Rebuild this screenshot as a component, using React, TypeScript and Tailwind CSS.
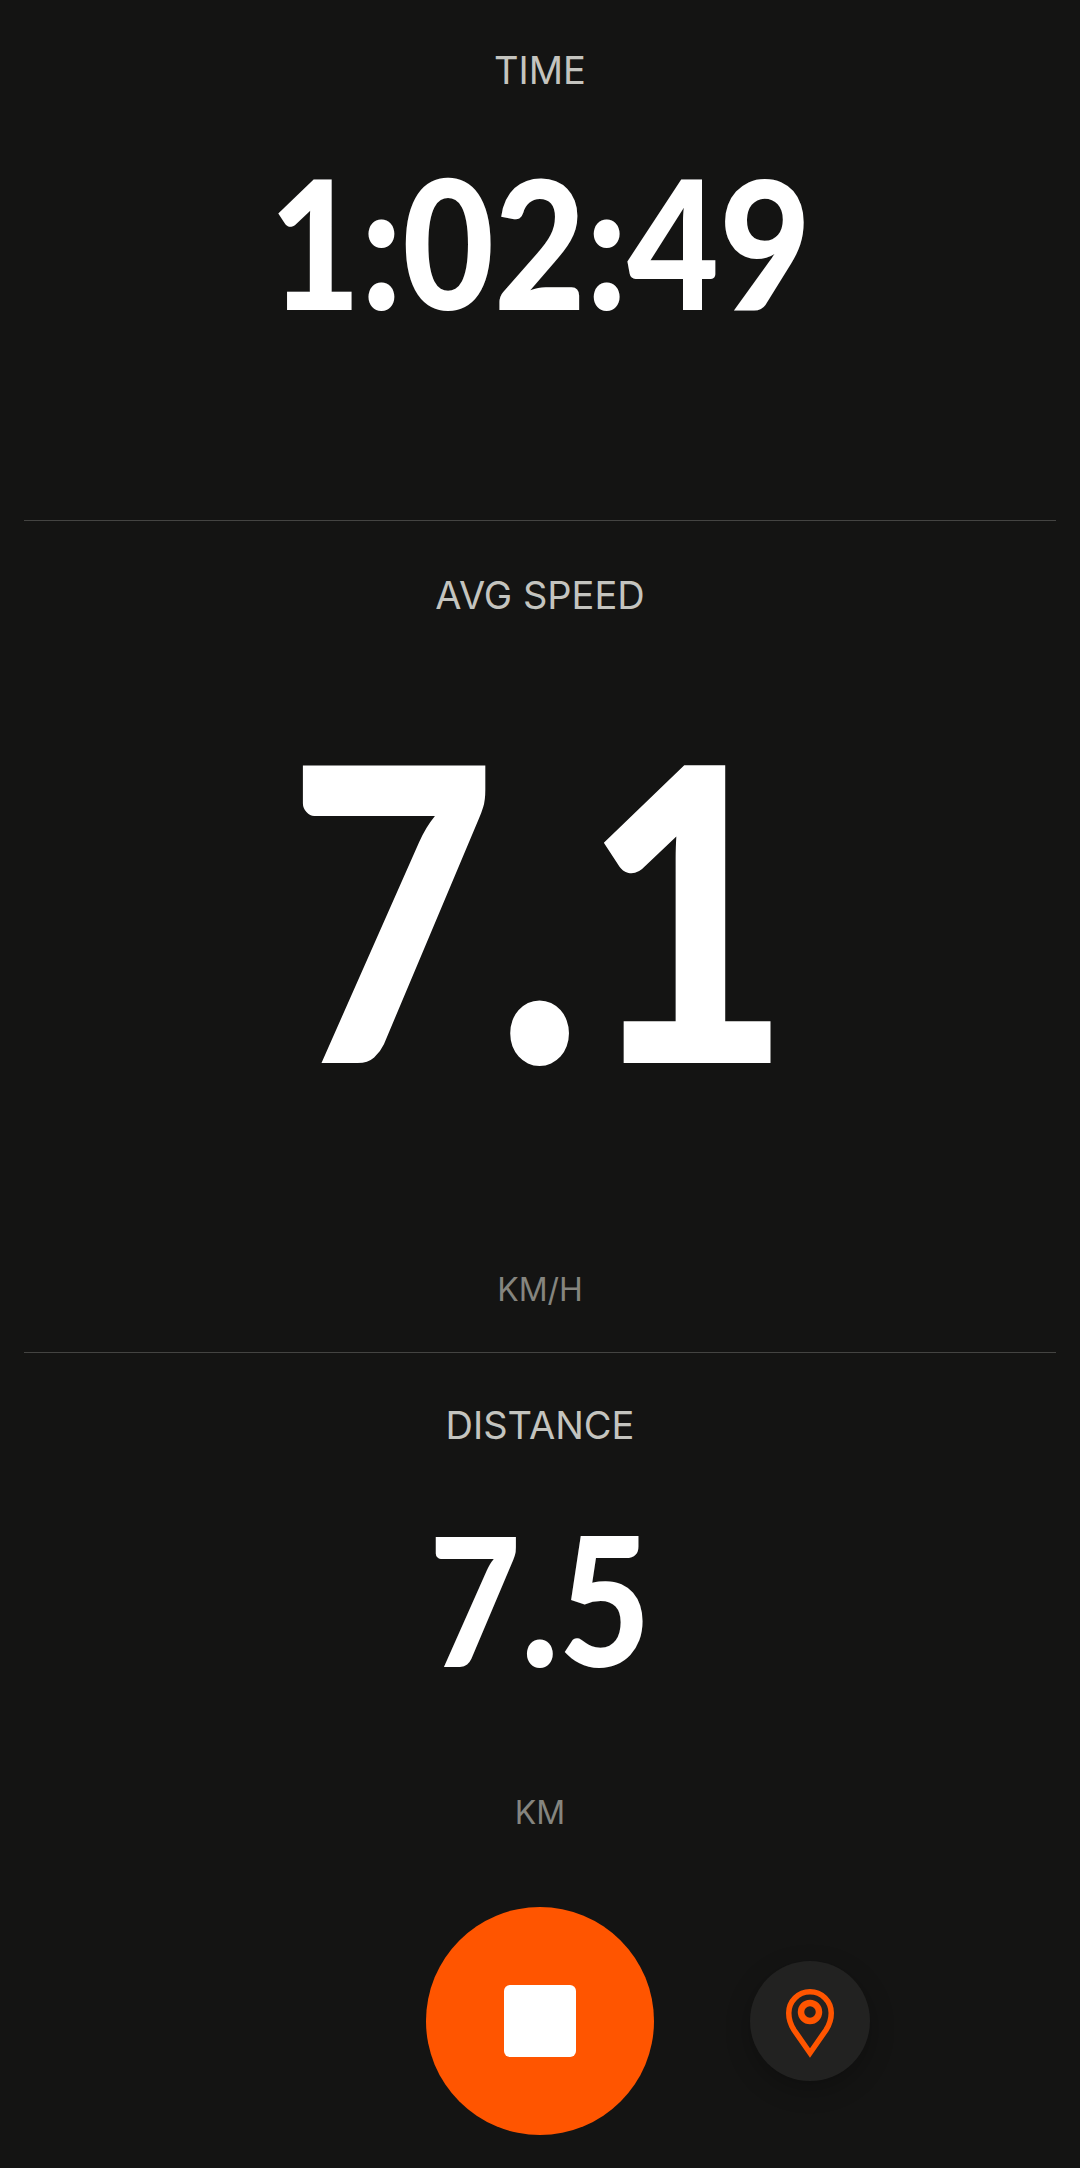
import React from "react";

const num = "font-['Lato',sans-serif] font-black text-white leading-none scale-x-[0.88]";
const label = "font-['Inter',sans-serif] text-[38px] leading-[44px] text-[#c4c4bf]";
const unit = "font-['Inter',sans-serif] text-[32px] leading-[40px] text-[#85857f]";

export default function App() {
  return (
    <div className="w-[1080px] h-[2168px] bg-[#141413] flex flex-col items-center overflow-hidden">
      <section className="w-full h-[520px] flex flex-col items-center pt-[48px]">
        <div className={label}>TIME</div>
        <div className={`${num} text-[180px] mt-[58px]`}>1:02:49</div>
      </section>
      <div className="w-[1032px] h-px bg-[#444442]" />
      <section className="w-full h-[831px] flex flex-col items-center pt-[52px]">
        <div className={label}>AVG SPEED</div>
        <div className={`${num} text-[410px] mt-[82px]`}>7.1</div>
        <div className={`${unit} mt-auto mb-[42px]`}>KM/H</div>
      </section>
      <div className="w-[1032px] h-px bg-[#444442]" />
      <section className="w-full flex flex-col items-center pt-[50px]">
        <div className={label}>DISTANCE</div>
        <div className={`${num} text-[180px] mt-[60px]`}>7.5</div>
        <div className={`${unit} mt-[106px]`}>KM</div>
      </section>
      <div className="relative w-full flex justify-center mt-[74px]">
        <button className="w-[228px] h-[228px] rounded-full bg-[#ff5500] flex items-center justify-center">
          <span className="block w-[72px] h-[72px] rounded-[6px] bg-white" />
        </button>
        <button className="absolute left-[750px] top-[54px] w-[120px] h-[120px] rounded-full bg-[#222221] shadow-[0_8px_24px_rgba(0,0,0,0.25)] flex items-center justify-center pt-[3px]">
          <svg width="48" height="70" viewBox="0 0 48 70" fill="none" stroke="#ff5500" strokeWidth="5.5">
            <path d="M24 65 L8 42 C3.5 35 2.75 30 2.75 25 A21.25 21.25 0 0 1 45.25 25 C45.25 30 44.5 35 40 42 Z" />
            <circle cx="24" cy="24" r="9" strokeWidth="6.5" />
          </svg>
        </button>
      </div>
    </div>
  );
}
